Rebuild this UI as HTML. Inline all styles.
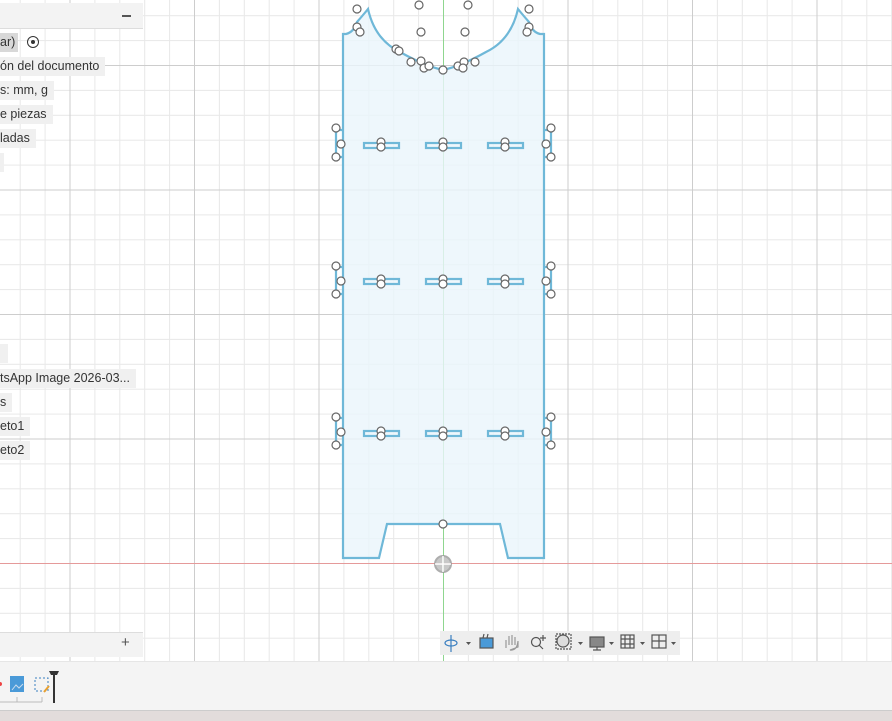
<!DOCTYPE html>
<html><head><meta charset="utf-8"><style>
body{margin:0;width:892px;height:720px;overflow:hidden;background:#fff;font-family:"Liberation Sans",sans-serif;position:relative}
svg{position:absolute;left:0;top:0}
.it{position:absolute;left:0;height:19px;background:#f0f0f0;font-size:12.5px;color:#333;line-height:19px;padding-right:6px;white-space:nowrap}
</style></head><body>
<svg width="892" height="720">
<defs>
<pattern id="mi" x="19.7" y="15.2" width="24.9" height="24.9" patternUnits="userSpaceOnUse">
<path d="M0.5 0V24.9M0 0.5H24.9" stroke="#e8e8e8" stroke-width="1"/></pattern>
<pattern id="ma" x="69.5" y="65" width="124.5" height="124.5" patternUnits="userSpaceOnUse">
<path d="M0.5 0V124.5M0 0.5H124.5" stroke="#cdcdcd" stroke-width="1"/></pattern>
</defs>
<rect width="892" height="720" fill="url(#mi)"/>
<rect width="892" height="720" fill="url(#ma)"/>
<line x1="443.5" y1="0" x2="443.5" y2="661" stroke="#8fd68f"/>
<line x1="0" y1="563.5" x2="892" y2="563.5" stroke="#e59a9a"/>
<g fill="#eaf5fb" fill-opacity="0.8" stroke="#6fb8d8" stroke-width="2.2">
<path d="M343 558V34H346Q354 32 357 22Q364 14 368 9Q375 40 400 52Q425 66 443 70Q461 66 486 52Q511 40 518 9Q522 14 529 22Q532 32 540 34H544V558H508L500 524H387L379 558Z"/>
</g>
<g fill="none" stroke="#6fb8d8" stroke-width="2.2">
<path d="M343 130H336V157H343M544 130H551V157H544"/>
<path d="M343 267H336V294H343M544 267H551V294H544"/>
<path d="M343 418H336V445H343M544 418H551V445H544"/>
</g>
<g fill="none" stroke="#6fb8d8" stroke-width="2.2">
<rect x="364" y="143" width="35" height="5"/><rect x="426" y="143" width="35" height="5"/><rect x="488" y="143" width="35" height="5"/>
<rect x="364" y="279" width="35" height="5"/><rect x="426" y="279" width="35" height="5"/><rect x="488" y="279" width="35" height="5"/>
<rect x="364" y="431" width="35" height="5"/><rect x="426" y="431" width="35" height="5"/><rect x="488" y="431" width="35" height="5"/>
</g>
<g fill="#fff" stroke="#666" stroke-width="1.2">
<circle cx="357" cy="9" r="4"/><circle cx="419" cy="5" r="4"/><circle cx="468" cy="5" r="4"/><circle cx="529" cy="9" r="4"/>
<circle cx="357" cy="27" r="4"/><circle cx="360" cy="32" r="4"/><circle cx="421" cy="32" r="4"/><circle cx="465" cy="32" r="4"/><circle cx="529" cy="27" r="4"/><circle cx="527" cy="32" r="4"/>
<circle cx="396" cy="49" r="4"/><circle cx="399" cy="51" r="4"/><circle cx="411" cy="62" r="4"/><circle cx="421" cy="61" r="4"/><circle cx="424" cy="68" r="4"/><circle cx="429" cy="66" r="4"/>
<circle cx="443" cy="70" r="4"/><circle cx="458" cy="66" r="4"/><circle cx="464" cy="62" r="4"/><circle cx="463" cy="68" r="4"/><circle cx="475" cy="62" r="4"/>
<circle cx="336" cy="128" r="4"/><circle cx="341" cy="144" r="4"/><circle cx="336" cy="157" r="4"/><circle cx="551" cy="128" r="4"/><circle cx="546" cy="144" r="4"/><circle cx="551" cy="157" r="4"/>
<circle cx="336" cy="266" r="4"/><circle cx="341" cy="281" r="4"/><circle cx="336" cy="294" r="4"/><circle cx="551" cy="266" r="4"/><circle cx="546" cy="281" r="4"/><circle cx="551" cy="294" r="4"/>
<circle cx="336" cy="417" r="4"/><circle cx="341" cy="432" r="4"/><circle cx="336" cy="445" r="4"/><circle cx="551" cy="417" r="4"/><circle cx="546" cy="432" r="4"/><circle cx="551" cy="445" r="4"/>
<circle cx="381" cy="142" r="4"/><circle cx="381" cy="147" r="4"/><circle cx="443" cy="142" r="4"/><circle cx="443" cy="147" r="4"/><circle cx="505" cy="142" r="4"/><circle cx="505" cy="147" r="4"/>
<circle cx="381" cy="279" r="4"/><circle cx="381" cy="284" r="4"/><circle cx="443" cy="279" r="4"/><circle cx="443" cy="284" r="4"/><circle cx="505" cy="279" r="4"/><circle cx="505" cy="284" r="4"/>
<circle cx="381" cy="431" r="4"/><circle cx="381" cy="436" r="4"/><circle cx="443" cy="431" r="4"/><circle cx="443" cy="436" r="4"/><circle cx="505" cy="431" r="4"/><circle cx="505" cy="436" r="4"/>
<circle cx="443" cy="524" r="4"/>
</g>
<circle cx="443" cy="564" r="8" fill="#bbb" stroke="#999" stroke-width="2" opacity="0.8"/>
<path d="M443 556V572M435 564H451" stroke="#fff" stroke-width="1.5"/>
<rect x="440" y="631" width="240" height="24" fill="#eeeeee"/>
<g stroke="#555" fill="none" stroke-width="1.2">
<ellipse cx="451" cy="643" rx="6" ry="3" stroke="#3a7fc0"/><line x1="451" y1="635" x2="451" y2="652" stroke="#3a7fc0"/>
<rect x="480" y="638" width="13" height="10" fill="#4a9ad8"/><path d="M483 638L484 634M487 638L488 634"/>
<path d="M506 648V640M509 645V636M512 645V635M515 645V637M518 647V641Q517 651 510 650Z" stroke="#999"/>
<circle cx="536" cy="642" r="4.5"/><path d="M539 645L543 649M543 635V641M540 638H546"/>
<rect x="556" y="634" width="15" height="15" stroke-dasharray="2 1"/><circle cx="563" cy="641" r="6" fill="#ddd"/>
<rect x="590" y="637" width="14" height="10" fill="#888"/><path d="M597 647V650M593 650H601"/>
<rect x="621" y="635" width="13" height="13"/><path d="M625 635V648M630 635V648M621 639H634M621 644H634"/>
<rect x="652" y="635" width="14" height="13"/><path d="M659 635V648M652 641H666"/>
</g>
<g fill="#555"><path d="M466 642h5l-2.5 3z"/><path d="M578 642h5l-2.5 3z"/><path d="M609 642h5l-2.5 3z"/><path d="M640 642h5l-2.5 3z"/><path d="M671 642h5l-2.5 3z"/></g>
</svg>
<div style="position:absolute;left:0;top:3px;width:143px;height:25px;background:#f3f3f3;border-bottom:1px solid #ddd"></div>
<div style="position:absolute;left:122px;top:15px;width:9px;height:1.5px;background:#555"></div>
<div class="it" style="top:33px;background:transparent;padding:0"><span style="background:#d8d8d8;padding:0 3px 0 0;display:inline-block;height:19px">ar)</span> <span style="display:inline-block;width:10px;height:10px;border:1.5px solid #333;border-radius:50%;vertical-align:-2px;margin-left:5px;position:relative"><span style="position:absolute;left:3px;top:3px;width:4px;height:4px;background:#333;border-radius:50%"></span></span></div>
<div class="it" style="top:57px">ón del documento</div>
<div class="it" style="top:81px">s: mm, g</div>
<div class="it" style="top:105px">e piezas</div>
<div class="it" style="top:129px">ladas</div>
<div class="it" style="top:153px;width:0;padding-right:4px"></div>
<div class="it" style="top:344px;width:0;padding-right:8px"></div>
<div class="it" style="top:369px">tsApp Image 2026-03...</div>
<div class="it" style="top:393px">s</div>
<div class="it" style="top:417px">eto1</div>
<div class="it" style="top:441px">eto2</div>
<div style="position:absolute;left:0;top:632px;width:143px;height:24px;background:#f3f3f3;border-top:1px solid #ddd"></div>
<div style="position:absolute;left:121px;top:634px;font-size:15px;color:#555">+</div>
<div style="position:absolute;left:0;top:661px;width:892px;height:49px;background:#f4f4f4;border-top:1px solid #e6e6e6"></div>
<div style="position:absolute;left:0;top:710px;width:892px;height:10px;background:#e2dcdb;border-top:1px solid #ccc"></div>
<svg width="892" height="720" style="pointer-events:none">
<rect x="10" y="676" width="14" height="16" fill="#4a9ad8"/><path d="M12 690l4-5 3 3 4-4" stroke="#cde" fill="none"/>
<rect x="35" y="678" width="13" height="13" fill="none" stroke="#3a7fc0" stroke-dasharray="2 2"/>
<path d="M44 692l5-6" stroke="#e8a030" stroke-width="2"/>
<path d="M49 671h10l-2 4h-6z" fill="#333"/><line x1="54" y1="672" x2="54" y2="703" stroke="#333" stroke-width="2"/>
<path d="M0 702H42M17 697V702M42 697V702" stroke="#bbb"/>
<circle cx="0" cy="684" r="2" fill="#e44"/>
</svg>
</body></html>
